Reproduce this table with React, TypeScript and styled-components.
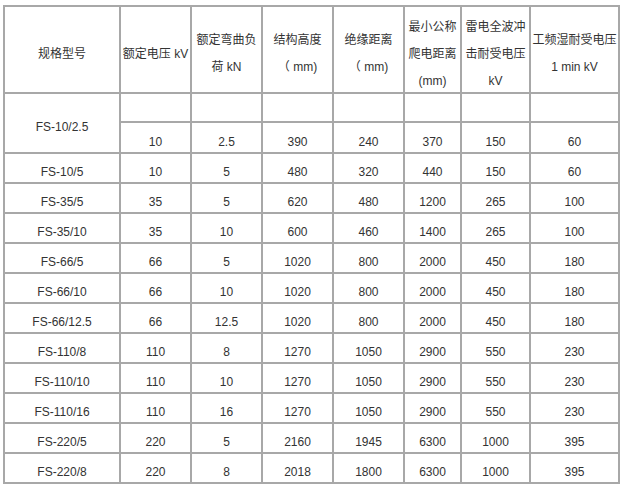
import styled, { createGlobalStyle } from "styled-components";

const GlobalStyle = createGlobalStyle`
  body {
    margin: 0;
    background: #ffffff;
    font-family: "Liberation Sans", "Noto Sans CJK SC", sans-serif;
    font-size: 12px;
    color: #333;
  }
`;

const Page = styled.div`
  padding: 5px 0 0 3px;
`;

const Table = styled.table`
  width: 615px;
  table-layout: fixed;
  border-collapse: collapse;
  border: 2px solid #a8a8a8;
`;

const HeadCell = styled.th`
  padding: 9px 0 0;
  border: 2px solid #a8a8a8;
  font-weight: normal;
  text-align: center;
  vertical-align: top;
  white-space: nowrap;
  color: #333;
`;

const HeadText = styled.div`
  height: 76px;
  display: flex;
  flex-direction: column;
  justify-content: center;
  align-items: center;
  line-height: 27px;
`;

const Cell = styled.td<{ $h?: number }>`
  height: ${(p) => (p.$h ?? 28) - 8}px;
  padding: 8px 0 0;
  border: 2px solid #a8a8a8;
  text-align: center;
  vertical-align: middle;
  white-space: nowrap;
  line-height: 16px;
`;

const columns = [116, 71, 71, 71, 71, 57, 69, 89];

const headers: string[][] = [
  ["规格型号"],
  ["额定电压 kV"],
  ["额定弯曲负", "荷 kN"],
  ["结构高度", "（ mm)"],
  ["绝缘距离", "（ mm)"],
  ["最小公称", "爬电距离", "(mm)"],
  ["雷电全波冲", "击耐受电压", "kV"],
  ["工频湿耐受电压", "1 min kV"],
];

const rows: string[][] = [
  ["FS-10/5", "10", "5", "480", "320", "440", "150", "60"],
  ["FS-35/5", "35", "5", "620", "480", "1200", "265", "100"],
  ["FS-35/10", "35", "10", "600", "460", "1400", "265", "100"],
  ["FS-66/5", "66", "5", "1020", "800", "2000", "450", "180"],
  ["FS-66/10", "66", "10", "1020", "800", "2000", "450", "180"],
  ["FS-66/12.5", "66", "12.5", "1020", "800", "2000", "450", "180"],
  ["FS-110/8", "110", "8", "1270", "1050", "2900", "550", "230"],
  ["FS-110/10", "110", "10", "1270", "1050", "2900", "550", "230"],
  ["FS-110/16", "110", "16", "1270", "1050", "2900", "550", "230"],
  ["FS-220/5", "220", "5", "2160", "1945", "6300", "1000", "395"],
  ["FS-220/8", "220", "8", "2018", "1800", "6300", "1000", "395"],
];

const first = ["10", "2.5", "390", "240", "370", "150", "60"];

export default function App() {
  return (
    <Page>
      <GlobalStyle />
      <Table>
        <colgroup>
          {columns.map((w, i) => (
            <col key={i} style={{ width: w }} />
          ))}
        </colgroup>
        <thead>
          <tr>
            {headers.map((lines, i) => (
              <HeadCell key={i}>
                <HeadText>
                  {lines.map((l) => (
                    <span key={l}>{l}</span>
                  ))}
                </HeadText>
              </HeadCell>
            ))}
          </tr>
        </thead>
        <tbody>
          <tr>
            <Cell rowSpan={2}>FS-10/2.5</Cell>
            {first.map((_, i) => (
              <Cell key={i} $h={27} />
            ))}
          </tr>
          <tr>
            {first.map((v, i) => (
              <Cell key={i} $h={29}>
                {v}
              </Cell>
            ))}
          </tr>
          {rows.map((r) => (
            <tr key={r[0]}>
              {r.map((v, i) => (
                <Cell key={i}>{v}</Cell>
              ))}
            </tr>
          ))}
        </tbody>
      </Table>
    </Page>
  );
}
